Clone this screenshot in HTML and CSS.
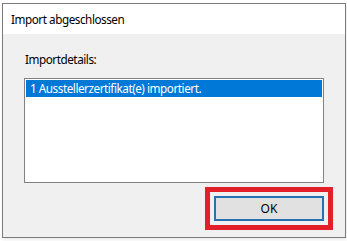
FILE: index.html
```html
<!DOCTYPE html>
<html lang="de">
<head>
<meta charset="utf-8">
<title>Import abgeschlossen</title>
<link rel="stylesheet" href="styles.css">
</head>
<body>
<div class="window">
  <div class="titlebar">Import abgeschlossen</div>
  <div class="content">
    <div class="label">Importdetails:</div>
    <div class="listbox">
      <div class="item selected">1 Ausstellerzertifikat(e) importiert.</div>
    </div>
    <div class="buttons">
      <button class="btn" type="button">OK</button>
    </div>
  </div>
</div>
</body>
</html>
```
FILE: styles.css
```css
html, body {
  margin: 0;
  padding: 0;
  background: #ffffff;
  width: 347px;
  height: 241px;
  overflow: hidden;
}
body {
  font-family: "Noto Sans", "Open Sans", sans-serif;
  font-size: 11.7px;
  letter-spacing: -0.45px;
  color: #000;
}
.window {
  margin: 3px 0 0 2px;
  width: 342px;
  height: 233px;
  border: 1px solid #7a7a7a;
  background: #f0f0f0;
  display: flex;
  flex-direction: column;
  box-shadow: 1px 2px 3px rgba(0,0,0,0.08);
}
.titlebar {
  height: 30px;
  background: #ffffff;
  display: flex;
  align-items: center;
  padding-left: 8px;
  line-height: 17px;
}
.content {
  padding: 17px 21px 0 21px;
  display: flex;
  flex-direction: column;
}
.label {
  line-height: 17px;
  padding-left: 1px;
}
.listbox {
  margin-top: 10px;
  height: 102px;
  border: 1px solid #828282;
  background: #ffffff;
  padding: 1px 1px 0 1px;
}
.item {
  height: 17px;
  line-height: 17px;
  padding-left: 4px;
  white-space: nowrap;
}
.selected {
  background: #0078d7;
  color: #ffffff;
}
.buttons {
  margin-top: 13px;
  display: flex;
  justify-content: flex-end;
}
.btn {
  width: 110px;
  height: 25px;
  background: #e1e1e1;
  border: 2px solid #2672b0;
  font-family: inherit;
  font-size: 12px;
  letter-spacing: 0;
  color: #000;
  padding: 0;
  margin: 0;
  outline: 5px solid #e3202a;
  outline-offset: 4px;
}
```
